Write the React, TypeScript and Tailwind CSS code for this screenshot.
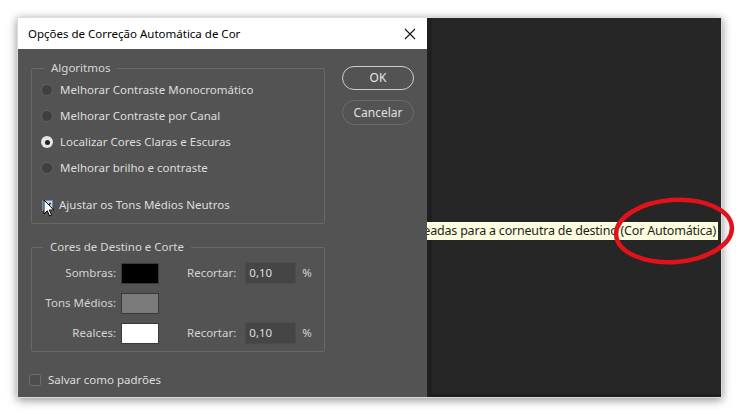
import React from "react";

const ui = { fontFamily: '"Noto Sans", "Open Sans", sans-serif' };

function Radio({ label, checked }: { label: string; checked?: boolean }) {
  return (
    <div className="flex items-center h-[26px]">
      {checked ? (
        <span className="w-[12px] h-[12px] rounded-full bg-[#e6e6e6] flex items-center justify-center">
          <span className="w-[5px] h-[5px] rounded-full bg-[#222]" />
        </span>
      ) : (
        <span className="w-[12px] h-[12px] rounded-full bg-[#3f3f3f] border border-[#606060]" />
      )}
      <span className="ml-[7px] text-[11.5px] text-[#dedede]">{label}</span>
    </div>
  );
}

function ColorRow({ label, swatch, clip }: { label: string; swatch: string; clip?: boolean }) {
  return (
    <div className="flex items-center h-[22px]">
      <span className="w-[84px] text-right text-[11.5px] text-[#d4d4d4]">{label}</span>
      <span className={`ml-[5px] w-[38px] h-[21px] border border-[#3a3a3a] ${swatch}`} />
      {clip && (
        <>
          <span className="ml-[28px] text-[11.5px] text-[#d4d4d4]">Recortar:</span>
          <span className="ml-[9px] w-[51px] h-[22px] bg-[#454545] border border-[#4c4c4c] text-[11.5px] text-[#dedede] pl-[3px] leading-[20px]">
            0,10
          </span>
          <span className="ml-[6px] text-[11.5px] text-[#d4d4d4]">%</span>
        </>
      )}
    </div>
  );
}

export default function App() {
  return (
    <div className="relative w-[739px] h-[415px] bg-white overflow-hidden pt-[17px] pl-[17px]" style={ui}>
      <div className="w-[705px] h-[381px] border border-[#dcdcdc] shadow-[0_2px_9px_rgba(0,0,0,0.45)] flex">
        {/* dialog */}
        <div className="w-[409px] flex flex-col">
          <div className="h-[31px] bg-white flex items-center justify-between pl-[10px] pr-[10px]">
            <span className="text-[11.5px] text-black">Opções de Correção Automática de Cor</span>
            <svg width="12" height="12" viewBox="0 0 12 12" className="mr-[1px]">
              <path d="M1 1 L11 11 M11 1 L1 11" stroke="#111" strokeWidth="1.1" />
            </svg>
          </div>
          <div className="flex-1 bg-[#535353] flex flex-col pl-[13px] pr-[13px]">
            <div className="flex mt-[11px]">
              <div className="w-[294px]">
                <fieldset className="border border-[#686868] rounded-[2px] pl-[9px] pb-[5px]">
                  <legend className="ml-[3px] px-[7px] text-[11.5px] text-[#d8d8d8] leading-[16px]">Algoritmos</legend>
                  <div className="pt-[1px]">
                    <Radio label="Melhorar Contraste Monocromático" />
                    <Radio label="Melhorar Contraste por Canal" />
                    <Radio label="Localizar Cores Claras e Escuras" checked />
                    <Radio label="Melhorar brilho e contraste" />
                  </div>
                  <div className="flex items-center h-[26px] mt-[11px]">
                    <span className="ml-[1px] w-[11px] h-[11px] bg-[#d6d6d6] border border-[#5f8fd6] flex items-center justify-center">
                      <svg width="9" height="9" viewBox="0 0 9 9">
                        <path d="M1.5 4.5 L3.6 6.7 L7.6 2" stroke="#2a2a2a" strokeWidth="1.6" fill="none" />
                      </svg>
                    </span>
                    <span className="ml-[6px] text-[11.5px] text-[#dedede]">Ajustar os Tons Médios Neutros</span>
                  </div>
                </fieldset>
                <fieldset className="mt-[15px] border border-[#686868] rounded-[2px] pb-[7px]">
                  <legend className="ml-[11px] px-[7px] text-[11.5px] text-[#d8d8d8] leading-[16px]">
                    Cores de Destino e Corte
                  </legend>
                  <div className="mt-[7px] flex flex-col gap-[8px]">
                    <ColorRow label="Sombras:" swatch="bg-black" clip />
                    <ColorRow label="Tons Médios:" swatch="bg-[#7b7b7b]" />
                    <ColorRow label="Realces:" swatch="bg-white" clip />
                  </div>
                </fieldset>
              </div>
              <div className="ml-[17px] w-[72px] flex flex-col gap-[10px] pt-[6px]">
                <button className="h-[24px] rounded-full border-[1.5px] border-[#cfcfcf] text-[12px] text-[#e8e8e8]">OK</button>
                <button className="h-[25px] rounded-full border border-[#6c6c6c] text-[12px] text-[#e0e0e0]">Cancelar</button>
              </div>
            </div>
            <div className="flex items-center mt-[19px] -ml-[2px]">
              <span className="w-[12px] h-[12px] rounded-[2px] bg-[#4d4d4d] border border-[#6e6e6e]" />
              <span className="ml-[7px] text-[11.5px] text-[#dedede]">Salvar como padrões</span>
            </div>
          </div>
        </div>
        {/* dark canvas */}
        <div className="flex-1 bg-[#262626] border-l-[5px] border-[#1f1f1f] border-b-[3px]" />
      </div>

      {/* tooltip */}
      <div className="absolute left-[427px] top-[222px] w-[291px] h-[18px] bg-[#fdfde0] overflow-hidden flex justify-end items-center pr-[2px]">
        <span className="whitespace-nowrap text-[12.5px] text-[#1e1e1e] tracking-[-0.2px]">
          mapeadas para a corneutra de destino (Cor Automática)
        </span>
      </div>

      {/* red highlight */}
      <svg className="absolute left-[608px] top-[194px]" width="131" height="74" viewBox="0 0 131 74">
        <ellipse cx="66" cy="37" rx="58" ry="31" fill="none" stroke="#e2121b" strokeWidth="4.5" transform="rotate(-4 66 37)" />
      </svg>

      {/* mouse cursor */}
      <svg className="absolute left-[43px] top-[199px]" width="12" height="19" viewBox="0 0 12 19">
        <path d="M1 1 L1 15 L4.3 11.8 L6.6 17 L8.6 16.1 L6.3 11 L10.8 11 Z" fill="#fff" stroke="#000" strokeWidth="1" strokeLinejoin="round" />
      </svg>
    </div>
  );
}
